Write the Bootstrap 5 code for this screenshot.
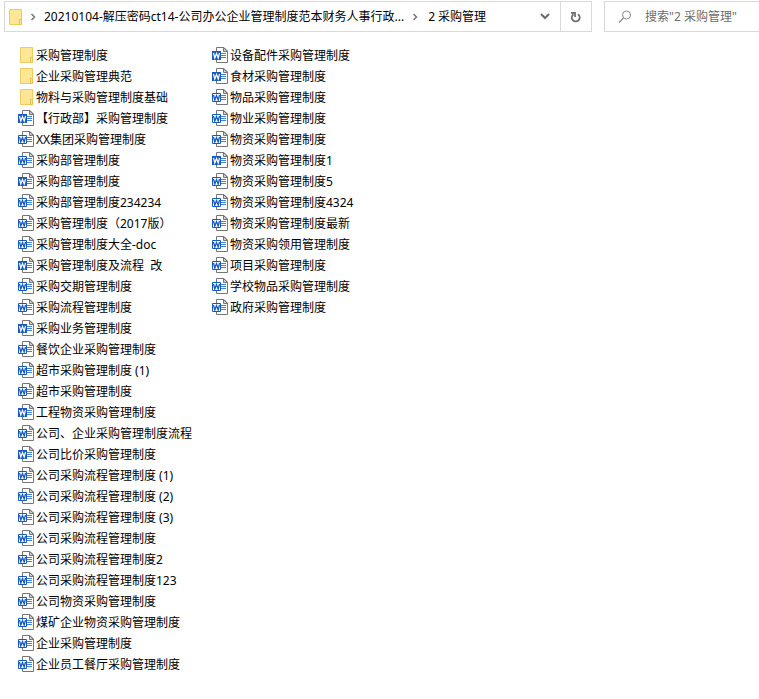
<!DOCTYPE html>
<html lang="zh-CN">
<head>
<meta charset="utf-8">
<meta name="viewport" content="width=device-width, initial-scale=1">
<title>2 采购管理</title>
<link href="https://cdn.jsdelivr.net/npm/bootstrap@5.3.0/dist/css/bootstrap.min.css" rel="stylesheet">
<style>
body { font-family: "Noto Sans", "Noto Sans CJK SC", sans-serif; font-size: 12px; line-height: 21px; color: #000; background: #fff; }
.topbar { padding: 1px 0 0 4px; gap: 12px; }
.bar-box { height: 31px; border: 1px solid #d9d9d9; }
.address { min-width: 0; }
.crumbs { padding-left: 2px; min-width: 0; }
.crumbs a, .entry { color: #000; text-decoration: none; white-space: nowrap; }
.crumbs .chevron { margin: 0 8px 0 7px; }
.crumbs a + .chevron { margin: 0 10px 0 8px; }
.bar-btn { width: 30px; border: 0; padding: 0; background: transparent; color: #6b6b6b; }
.bar-btn.refresh { border-left: 1px solid #d9d9d9; width: 31px; }
.search { width: 155px; padding-left: 13px; gap: 13px; }
.search input { border: 0; outline: 0; padding: 0; min-width: 0; background: transparent; color: #000; }
.search input::placeholder { color: #6d6d6d; opacity: 1; }
.files { padding: 13px 0 0 18px; }
.files ul { width: 194px; }
.entry { height: 21px; padding-bottom: 1px; gap: 2px; white-space: pre; }
.entry:hover { background: #e5f3ff; }
svg { display: block; flex: none; }
</style>
</head>
<body>
<svg width="0" height="0" class="position-absolute" aria-hidden="true">
  <symbol id="folder" viewBox="0 0 16 16">
    <path d="M2.500 .5h12v10h-2v5h-10z" fill="#ffe596" stroke="#f0cb62"/>
    <path d="M12.500 15.500v-5h2v5z" fill="#ffe9a8" stroke="#e9bf4b"/>
  </symbol>
  <symbol id="sheet" viewBox="0 0 16 16">
    <path d="M4.500 .5h7.500l3.500 3.500v11.500h-11z" fill="#fff" stroke="#767676"/>
    <path d="M11.500 .5v4h4z" fill="#d0d0d0" stroke="#767676"/>
    <path d="M9 6.500h5M9 8.500h5M9 10.500h5" stroke="#3f87d4"/>
  </symbol>
  <symbol id="docx" viewBox="0 0 16 16">
    <use href="#sheet"/>
    <path d="M0 4h9v9H0z" fill="#185abd"/>
    <path d="M1.500 6l1.300 5 1.700-4.500 1.700 4.500 1.300-5" fill="none" stroke="#fff" stroke-width="1.200"/>
  </symbol>
  <symbol id="doc" viewBox="0 0 16 16">
    <use href="#sheet"/>
    <path d="M.5 4.500h8v8h-8z" fill="#fff" stroke="#185abd"/>
    <path d="M1.500 6l1.300 5 1.700-4.500 1.700 4.500 1.300-5" fill="none" stroke="#185abd" stroke-width="1.300"/>
  </symbol>
  <symbol id="chev" viewBox="0 0 6 8"><path d="M1.500 1l3 3-3 3" fill="none" stroke="#777" stroke-width="1.500"/></symbol>
</svg>

<header class="topbar d-flex">
  <div class="bar-box address d-flex flex-fill">
    <nav class="crumbs d-flex align-items-center flex-fill" aria-label="地址">
      <svg width="16" height="16"><use href="#folder"/></svg>
      <svg class="chevron" width="6" height="8"><use href="#chev"/></svg>
      <a href="#" class="text-truncate">20210104-解压密码ct14-公司办公企业管理制度范本财务人事行政...</a>
      <svg class="chevron" width="6" height="8"><use href="#chev"/></svg>
      <a href="#">2 采购管理</a>
    </nav>
    <button type="button" class="bar-btn d-flex align-items-center justify-content-center" aria-label="以前的位置">
      <svg width="10" height="7" viewBox="0 0 10 7"><path d="M1 1l4 4 4-4" fill="none" stroke="currentColor" stroke-width="2"/></svg>
    </button>
    <button type="button" class="bar-btn refresh d-flex align-items-center justify-content-center" aria-label="刷新">
      <svg width="12" height="12" viewBox="0 0 12 12"><path d="M8 3.200A4 4 0 1 1 3.500 3.200M1 1.800h4V6" fill="none" stroke="currentColor" stroke-width="1.700"/></svg>
    </button>
  </div>
  <label class="bar-box search border-end-0 d-flex align-items-center flex-shrink-0">
    <svg width="14" height="14" viewBox="0 0 14 14"><circle cx="8.500" cy="5" r="4" fill="none" stroke="#85888c"/><path d="M5.500 8L1 12.500" stroke="#85888c" stroke-width="1.300"/></svg>
    <input class="flex-fill" type="search" aria-label="搜索" placeholder="搜索&quot;2 采购管理&quot;">
  </label>
</header>

<main class="files d-flex">
  <ul class="list-unstyled mb-0">
    <li><a href="#" class="entry d-flex align-items-center"><svg width="16" height="16"><use href="#folder"/></svg>采购管理制度</a></li>
    <li><a href="#" class="entry d-flex align-items-center"><svg width="16" height="16"><use href="#folder"/></svg>企业采购管理典范</a></li>
    <li><a href="#" class="entry d-flex align-items-center"><svg width="16" height="16"><use href="#folder"/></svg>物料与采购管理制度基础</a></li>
    <li><a href="#" class="entry d-flex align-items-center"><svg width="16" height="16"><use href="#docx"/></svg>【行政部】采购管理制度</a></li>
    <li><a href="#" class="entry d-flex align-items-center"><svg width="16" height="16"><use href="#doc"/></svg>XX集团采购管理制度</a></li>
    <li><a href="#" class="entry d-flex align-items-center"><svg width="16" height="16"><use href="#doc"/></svg>采购部管理制度</a></li>
    <li><a href="#" class="entry d-flex align-items-center"><svg width="16" height="16"><use href="#docx"/></svg>采购部管理制度</a></li>
    <li><a href="#" class="entry d-flex align-items-center"><svg width="16" height="16"><use href="#doc"/></svg>采购部管理制度234234</a></li>
    <li><a href="#" class="entry d-flex align-items-center"><svg width="16" height="16"><use href="#doc"/></svg>采购管理制度（2017版）</a></li>
    <li><a href="#" class="entry d-flex align-items-center"><svg width="16" height="16"><use href="#doc"/></svg>采购管理制度大全-doc</a></li>
    <li><a href="#" class="entry d-flex align-items-center"><svg width="16" height="16"><use href="#docx"/></svg>采购管理制度及流程  改</a></li>
    <li><a href="#" class="entry d-flex align-items-center"><svg width="16" height="16"><use href="#doc"/></svg>采购交期管理制度</a></li>
    <li><a href="#" class="entry d-flex align-items-center"><svg width="16" height="16"><use href="#doc"/></svg>采购流程管理制度</a></li>
    <li><a href="#" class="entry d-flex align-items-center"><svg width="16" height="16"><use href="#docx"/></svg>采购业务管理制度</a></li>
    <li><a href="#" class="entry d-flex align-items-center"><svg width="16" height="16"><use href="#doc"/></svg>餐饮企业采购管理制度</a></li>
    <li><a href="#" class="entry d-flex align-items-center"><svg width="16" height="16"><use href="#doc"/></svg>超市采购管理制度 (1)</a></li>
    <li><a href="#" class="entry d-flex align-items-center"><svg width="16" height="16"><use href="#doc"/></svg>超市采购管理制度</a></li>
    <li><a href="#" class="entry d-flex align-items-center"><svg width="16" height="16"><use href="#docx"/></svg>工程物资采购管理制度</a></li>
    <li><a href="#" class="entry d-flex align-items-center"><svg width="16" height="16"><use href="#doc"/></svg>公司、企业采购管理制度流程</a></li>
    <li><a href="#" class="entry d-flex align-items-center"><svg width="16" height="16"><use href="#docx"/></svg>公司比价采购管理制度</a></li>
    <li><a href="#" class="entry d-flex align-items-center"><svg width="16" height="16"><use href="#doc"/></svg>公司采购流程管理制度 (1)</a></li>
    <li><a href="#" class="entry d-flex align-items-center"><svg width="16" height="16"><use href="#doc"/></svg>公司采购流程管理制度 (2)</a></li>
    <li><a href="#" class="entry d-flex align-items-center"><svg width="16" height="16"><use href="#doc"/></svg>公司采购流程管理制度 (3)</a></li>
    <li><a href="#" class="entry d-flex align-items-center"><svg width="16" height="16"><use href="#doc"/></svg>公司采购流程管理制度</a></li>
    <li><a href="#" class="entry d-flex align-items-center"><svg width="16" height="16"><use href="#doc"/></svg>公司采购流程管理制度2</a></li>
    <li><a href="#" class="entry d-flex align-items-center"><svg width="16" height="16"><use href="#doc"/></svg>公司采购流程管理制度123</a></li>
    <li><a href="#" class="entry d-flex align-items-center"><svg width="16" height="16"><use href="#doc"/></svg>公司物资采购管理制度</a></li>
    <li><a href="#" class="entry d-flex align-items-center"><svg width="16" height="16"><use href="#doc"/></svg>煤矿企业物资采购管理制度</a></li>
    <li><a href="#" class="entry d-flex align-items-center"><svg width="16" height="16"><use href="#doc"/></svg>企业采购管理制度</a></li>
    <li><a href="#" class="entry d-flex align-items-center"><svg width="16" height="16"><use href="#doc"/></svg>企业员工餐厅采购管理制度</a></li>
  </ul>
  <ul class="list-unstyled mb-0">
    <li><a href="#" class="entry d-flex align-items-center"><svg width="16" height="16"><use href="#docx"/></svg>设备配件采购管理制度</a></li>
    <li><a href="#" class="entry d-flex align-items-center"><svg width="16" height="16"><use href="#docx"/></svg>食材采购管理制度</a></li>
    <li><a href="#" class="entry d-flex align-items-center"><svg width="16" height="16"><use href="#doc"/></svg>物品采购管理制度</a></li>
    <li><a href="#" class="entry d-flex align-items-center"><svg width="16" height="16"><use href="#doc"/></svg>物业采购管理制度</a></li>
    <li><a href="#" class="entry d-flex align-items-center"><svg width="16" height="16"><use href="#doc"/></svg>物资采购管理制度</a></li>
    <li><a href="#" class="entry d-flex align-items-center"><svg width="16" height="16"><use href="#docx"/></svg>物资采购管理制度1</a></li>
    <li><a href="#" class="entry d-flex align-items-center"><svg width="16" height="16"><use href="#doc"/></svg>物资采购管理制度5</a></li>
    <li><a href="#" class="entry d-flex align-items-center"><svg width="16" height="16"><use href="#doc"/></svg>物资采购管理制度4324</a></li>
    <li><a href="#" class="entry d-flex align-items-center"><svg width="16" height="16"><use href="#doc"/></svg>物资采购管理制度最新</a></li>
    <li><a href="#" class="entry d-flex align-items-center"><svg width="16" height="16"><use href="#doc"/></svg>物资采购领用管理制度</a></li>
    <li><a href="#" class="entry d-flex align-items-center"><svg width="16" height="16"><use href="#doc"/></svg>项目采购管理制度</a></li>
    <li><a href="#" class="entry d-flex align-items-center"><svg width="16" height="16"><use href="#doc"/></svg>学校物品采购管理制度</a></li>
    <li><a href="#" class="entry d-flex align-items-center"><svg width="16" height="16"><use href="#doc"/></svg>政府采购管理制度</a></li>
  </ul>
</main>
<script src="https://cdn.jsdelivr.net/npm/bootstrap@5.3.0/dist/js/bootstrap.bundle.min.js"></script>
</body>
</html>
